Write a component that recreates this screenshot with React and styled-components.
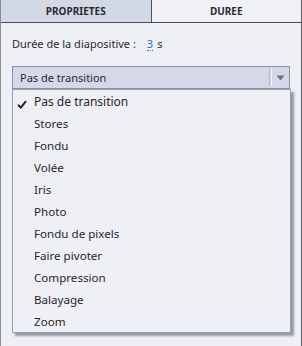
import React from "react";
import styled, { createGlobalStyle } from "styled-components";

const Global = createGlobalStyle`
  html, body { margin: 0; padding: 0; background: #eff0f5; }
  body { font-family: "Noto Sans", "DejaVu Sans", sans-serif; }
`;

const Frame = styled.div`
  width: 302px;
  height: 346px;
  box-sizing: border-box;
  border-left: 1px solid #8e8e92;
  border-right: 1px solid #5a5c62;
  background: #eff0f5;
  display: flex;
  flex-direction: column;
`;

const Tabs = styled.div`
  display: flex;
  height: 23px;
  box-sizing: border-box;
  border-bottom: 1px solid #4c4f57;
`;

const Tab = styled.div`
  flex: 1;
  display: flex;
  align-items: center;
  justify-content: center;
  font-size: 10px;
  font-weight: bold;
  color: #2a2a34;
  background: ${(p) => (p.$active ? "#d3d9e4" : "#f0f1f6")};
  border-right: ${(p) => (p.$active ? "1px solid #4c4f57" : "none")};
`;

const Body = styled.div`
  padding: 13px 11px 0 11px;
  display: flex;
  flex-direction: column;
`;

const DurationRow = styled.div`
  display: flex;
  align-items: baseline;
  font-size: 11px;
  color: #2a2a34;
  height: 18px;
`;

const Value = styled.span`
  color: #2f6fd0;
  border-bottom: 1px dotted #2f6fd0;
  margin-left: 11px;
  line-height: 13px;
`;

const Unit = styled.span`
  margin-left: 4px;
`;

const SelectBox = styled.div`
  margin-top: 12px;
  height: 23px;
  box-sizing: border-box;
  border: 1px solid #8c92a6;
  background: #d3d9e6;
  display: flex;
  align-items: center;
  font-size: 11px;
  color: #2a2a34;
  padding-left: 7px;
`;

const SelectText = styled.span`
  flex: 1;
`;

const Sep = styled.div`
  width: 1px;
  height: 17px;
  border-left: 1px solid #b0b6c6;
  border-right: 1px solid #f4f5f9;
`;

const Arrow = styled.div`
  width: 17px;
  display: flex;
  justify-content: center;
  align-items: center;
`;

const Menu = styled.div`
  border: 1px solid #9a9fae;
  background: #eff0f5;
  box-shadow: 3px 3px 2px rgba(90, 94, 110, 0.6);
  width: 279px;
  box-sizing: border-box;
`;

const Item = styled.div`
  height: 22px;
  display: flex;
  align-items: center;
  font-size: ${(p) => (p.$selected ? "12px" : "11.6px")};
  color: #262632;
  padding-left: 21px;
  position: relative;
`;

const Check = styled.span`
  position: absolute;
  left: 4px;
  top: 6px;
`;

const items = [
  "Pas de transition",
  "Stores",
  "Fondu",
  "Volée",
  "Iris",
  "Photo",
  "Fondu de pixels",
  "Faire pivoter",
  "Compression",
  "Balayage",
  "Zoom",
];

export default function App() {
  return (
    <>
      <Global />
      <Frame>
        <Tabs>
          <Tab $active>PROPRIETES</Tab>
          <Tab>DUREE</Tab>
        </Tabs>
        <Body>
          <DurationRow>
            Durée de la diapositive :<Value>3</Value>
            <Unit>s</Unit>
          </DurationRow>
          <SelectBox>
            <SelectText>Pas de transition</SelectText>
            <Sep />
            <Arrow>
              <svg width="9" height="6" viewBox="0 0 9 6">
                <path d="M0.5 0.5 L8.5 0.5 L4.5 5.5 Z" fill="#6a7088" />
              </svg>
            </Arrow>
          </SelectBox>
          <Menu>
            {items.map((t, i) => (
              <Item key={t} $selected={i === 0}>
                {i === 0 && (
                  <Check>
                    <svg width="10" height="9" viewBox="0 0 10 9">
                      <path d="M1 4.8 L3.8 7.6 L9 1.2" stroke="#26262e" strokeWidth="2" fill="none" />
                    </svg>
                  </Check>
                )}
                {t}
              </Item>
            ))}
          </Menu>
        </Body>
      </Frame>
    </>
  );
}
